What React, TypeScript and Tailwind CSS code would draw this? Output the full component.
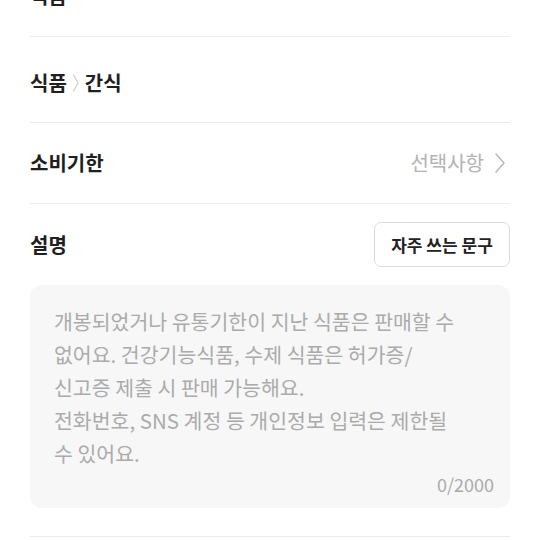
import React from 'react';

const FONT = { fontFamily: '"Noto Sans CJK KR", "Noto Sans", sans-serif' };

const placeholder = `개봉되었거나 유통기한이 지난 식품은 판매할 수
없어요. 건강기능식품, 수제 식품은 허가증/
신고증 제출 시 판매 가능해요.
전화번호, SNS 계정 등 개인정보 입력은 제한될
수 있어요.`;

const Divider = () => <div className="h-px bg-[#ebebeb]" />;

export default function App() {
  return (
    <div className="w-[540px] h-[540px] overflow-hidden bg-white" style={FONT}>
      <div className="mt-[-44px] px-[30px]">
        {/* 카테고리 (scrolled) */}
        <div className="h-[80px] flex items-center">
          <span className="text-[20px] font-bold text-[#1f1f1f]">식품</span>
        </div>
        <Divider />

        {/* breadcrumb */}
        <div className="h-[85px] pt-[6px] flex items-center">
          <span className="text-[20px] font-bold text-[#1f1f1f]">식품</span>
          <svg width="8" height="20" viewBox="0 0 8 20" className="mx-[5px]" fill="none">
            <path d="M1.5 2 L6 10 L1.5 18" stroke="#d2d2d2" strokeWidth="1.4" strokeLinecap="round" strokeLinejoin="round" />
          </svg>
          <span className="text-[20px] font-bold text-[#1f1f1f]">간식</span>
        </div>
        <Divider />

        {/* 소비기한 */}
        <button className="w-full h-[80px] flex items-center justify-between">
          <span className="text-[20px] font-bold text-[#1f1f1f]">소비기한</span>
          <span className="flex items-center gap-[10px]">
            <span className="text-[20px] text-[#b3b3b3]">선택사항</span>
            <svg width="12" height="22" viewBox="0 0 12 22" fill="none" className="mr-[4px]">
              <path d="M2 2 L10 11 L2 20" stroke="#b8b8b8" strokeWidth="1.5" strokeLinecap="round" strokeLinejoin="round" />
            </svg>
          </span>
        </button>
        <Divider />

        {/* 설명 */}
        <div className="pt-[18px] flex items-center justify-between">
          <span className="text-[20px] font-bold text-[#1f1f1f]">설명</span>
          <button className="h-[45px] w-[136px] rounded-[7px] border border-[#dcdcdc] text-[17px] font-bold text-[#222]">
            자주 쓰는 문구
          </button>
        </div>

        <div className="mt-[18px] h-[223px] rounded-[12px] bg-[#f7f7f7] pl-[24px] pr-[16px] pt-[20px] pb-[14px] flex flex-col">
          <p className="whitespace-pre-line text-[20.5px] leading-[33px] text-[#ababab]">{placeholder}</p>
          <div className="mt-auto text-right text-[18px] leading-[20px] text-[#ababab]">0/2000</div>
        </div>

        <div className="mt-[28px]">
          <Divider />
        </div>
      </div>
    </div>
  );
}
